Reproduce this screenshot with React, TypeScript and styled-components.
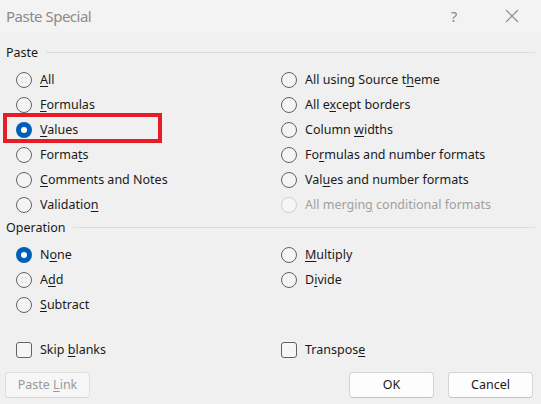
import React from "react";
import styled, { createGlobalStyle } from "styled-components";

const Global = createGlobalStyle`
  html, body { margin: 0; padding: 0; }
  body {
    background: #f0f0f0;
    font-family: "Noto Sans", "Open Sans", sans-serif;
    color: #1a1a1a;
  }
`;

const Dialog = styled.div`
  width: 541px;
  height: 404px;
  background: #f0f0f0;
  display: flex;
  flex-direction: column;
  overflow: hidden;
`;

const TitleBar = styled.div`
  height: 33px;
  background: #f3f3f3;
  display: flex;
  align-items: center;
  padding-left: 6px;
  box-sizing: border-box;
`;

const Title = styled.div`
  flex: 1;
  font-size: 15px;
  color: #8b8b8b;
  letter-spacing: -0.5px;
  margin-top: -2px;
`;

const TitleButton = styled.div<{ $w: number }>`
  width: ${(p) => p.$w}px;
  display: flex;
  justify-content: center;
  align-items: center;
  color: #8a8a8a;
  font-size: 15px;
  margin-top: -2px;
`;

const SectionHeader = styled.div<{ $top: number }>`
  display: flex;
  align-items: center;
  gap: 8px;
  margin: ${(p) => p.$top}px 6px 5px 6px;
  height: 20px;
  font-size: 12.5px;
  color: #1a1a1a;
  &::after {
    content: "";
    flex: 1;
    height: 1px;
    background: #dcdcdc;
  }
`;

const Grid = styled.div`
  display: grid;
  grid-template-columns: 265px 1fr;
  padding-left: 16px;
`;

const Row = styled.label<{ $disabled?: boolean }>`
  position: relative;
  height: 25px;
  display: flex;
  align-items: center;
  gap: 8px;
  font-size: 12.5px;
  color: ${(p) => (p.$disabled ? "#a0a0a0" : "#1a1a1a")};
  white-space: nowrap;
`;

const RadioCircle = styled.span<{ $checked?: boolean; $disabled?: boolean }>`
  width: 16px;
  height: 16px;
  box-sizing: border-box;
  border-radius: 50%;
  flex: none;
  display: flex;
  align-items: center;
  justify-content: center;
  border: ${(p) =>
    p.$checked ? "none" : p.$disabled ? "1px solid #d0d0d0" : "1px solid #626262"};
  background: ${(p) => (p.$checked ? "#005fb8" : p.$disabled ? "#f6f6f6" : "#f4f4f4")};
  &::after {
    content: "";
    display: ${(p) => (p.$checked ? "block" : "none")};
    width: 6px;
    height: 6px;
    border-radius: 50%;
    background: #ffffff;
  }
`;

const CheckSquare = styled.span`
  width: 16px;
  height: 16px;
  box-sizing: border-box;
  border-radius: 3px;
  border: 1px solid #626262;
  background: #f6f6f6;
  flex: none;
`;

const Label = styled.span`
  margin-top: -1px;
  u {
    text-decoration: underline;
    text-underline-offset: 2px;
  }
`;

const Highlight = styled.span`
  position: absolute;
  left: -13px;
  top: -4px;
  width: 159px;
  height: 30px;
  box-sizing: border-box;
  border: 4px solid #e81c27;
  pointer-events: none;
`;

const CheckRow = styled.div`
  display: grid;
  grid-template-columns: 265px 1fr;
  padding-left: 16px;
  margin-top: 20px;
`;

const ButtonBar = styled.div`
  display: flex;
  align-items: center;
  padding: 0 8px 0 5px;
  margin-top: 10px;
  gap: 14px;
`;

const Spacer = styled.div`
  flex: 1;
`;

const Button = styled.button<{ $disabled?: boolean }>`
  width: 85px;
  height: 26px;
  box-sizing: border-box;
  border-radius: 4px;
  border: 1px solid ${(p) => (p.$disabled ? "#dedede" : "#d4d4d4")};
  border-bottom-color: ${(p) => (p.$disabled ? "#d6d6d6" : "#c4c4c4")};
  background: ${(p) => (p.$disabled ? "#f6f6f6" : "#fdfdfd")};
  color: ${(p) => (p.$disabled ? "#9a9a9a" : "#1a1a1a")};
  font-family: "Noto Sans", "Open Sans", sans-serif;
  font-size: 12.5px;
  padding: 0;
  padding-bottom: 1px;
  u {
    text-decoration: underline;
    text-underline-offset: 2px;
  }
`;

type Item = { pre: string; key?: string; post?: string; checked?: boolean; disabled?: boolean; mark?: boolean };

const Radio: React.FC<{ item: Item }> = ({ item }) => (
  <Row $disabled={item.disabled}>
    <RadioCircle $checked={item.checked} $disabled={item.disabled} />
    <Label>
      {item.pre}
      {item.key && <u>{item.key}</u>}
      {item.post}
    </Label>
    {item.mark && <Highlight />}
  </Row>
);

const pasteItems: Item[] = [
  { pre: "", key: "A", post: "ll" },
  { pre: "All using Source t", key: "h", post: "eme" },
  { pre: "", key: "F", post: "ormulas" },
  { pre: "All e", key: "x", post: "cept borders" },
  { pre: "", key: "V", post: "alues", checked: true, mark: true },
  { pre: "Column ", key: "w", post: "idths" },
  { pre: "Forma", key: "t", post: "s" },
  { pre: "Fo", key: "r", post: "mulas and number formats" },
  { pre: "", key: "C", post: "omments and Notes" },
  { pre: "Val", key: "u", post: "es and number formats" },
  { pre: "Validatio", key: "n", post: "" },
  { pre: "All mergin", key: "g", post: " conditional formats", disabled: true },
];

const opItems: Item[] = [
  { pre: "N", key: "o", post: "ne", checked: true },
  { pre: "", key: "M", post: "ultiply" },
  { pre: "A", key: "d", post: "d" },
  { pre: "D", key: "i", post: "vide" },
  { pre: "", key: "S", post: "ubtract" },
];

export default function App() {
  return (
    <>
      <Global />
      <Dialog>
        <TitleBar>
          <Title>Paste Special</Title>
          <TitleButton $w={70}>?</TitleButton>
          <TitleButton $w={46}>
            <svg width="14" height="14" viewBox="0 0 14 14">
              <path d="M1 1 L13 13 M13 1 L1 13" stroke="#8a8a8a" strokeWidth="1.1" fill="none" />
            </svg>
          </TitleButton>
          <TitleButton $w={6} />
        </TitleBar>

        <SectionHeader $top={9}>Paste</SectionHeader>
        <Grid>
          {pasteItems.map((it, i) => (
            <Radio key={i} item={it} />
          ))}
        </Grid>

        <SectionHeader $top={0}>Operation</SectionHeader>
        <Grid>
          {opItems.map((it, i) => (
            <Radio key={i} item={it} />
          ))}
        </Grid>

        <CheckRow>
          <Row>
            <CheckSquare />
            <Label>
              Skip <u>b</u>lanks
            </Label>
          </Row>
          <Row>
            <CheckSquare />
            <Label>
              Transpos<u>e</u>
            </Label>
          </Row>
        </CheckRow>

        <ButtonBar>
          <Button $disabled>
            Paste <u>L</u>ink
          </Button>
          <Spacer />
          <Button>OK</Button>
          <Button>Cancel</Button>
        </ButtonBar>
      </Dialog>
    </>
  );
}
